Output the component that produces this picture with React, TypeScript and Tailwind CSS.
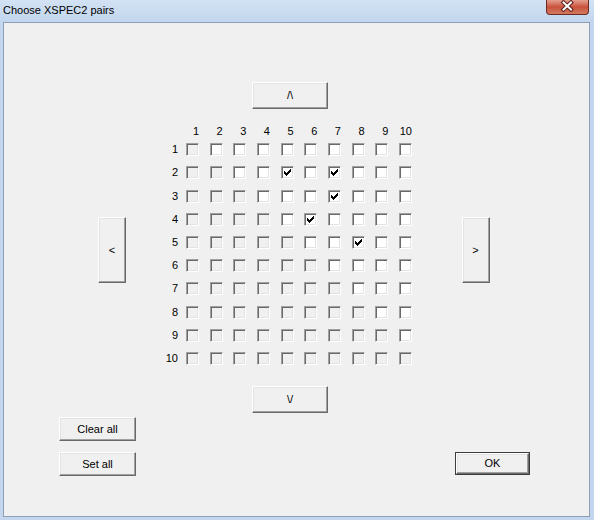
import React from "react";

const checked = new Set(["2-5", "2-7", "3-7", "4-6", "5-8"]);
const nums = [1, 2, 3, 4, 5, 6, 7, 8, 9, 10];

function Btn({ className, children }: { className: string; children: React.ReactNode }) {
  return (
    <div
      className={`flex items-center justify-center bg-[#f0f0f0] border border-t-white border-l-white border-r-[#696969] border-b-[#696969] shadow-[inset_-1px_-1px_0_#a0a0a0,inset_1px_1px_0_#e3e3e3] text-[11px] leading-[13px] text-black ${className}`}
    >
      {children}
    </div>
  );
}

function Check({ on, enabled }: { on: boolean; enabled: boolean }) {
  return (
    <div
      className={`relative w-[13px] h-[13px] border border-t-[#a0a0a0] border-l-[#a0a0a0] border-r-white border-b-white shadow-[inset_1px_1px_0_#696969,inset_-1px_-1px_0_#e3e3e3] ${
        enabled ? "bg-white" : "bg-[#f0f0f0]"
      }`}
    >
      {on && (
        <svg
          className="absolute left-[2px] top-[2px]"
          width="7"
          height="7"
          viewBox="0 0 7 7"
          shapeRendering="crispEdges"
        >
          <path
            fill="#000"
            d="M6 0h1v1h-1z M5 1h2v1h-2z M0 2h1v1h-1z M4 2h3v1h-3z M0 3h2v1h-2z M3 3h3v1h-3z M0 4h5v1h-5z M1 5h3v1h-3z M2 6h1v1h-1z"
          />
        </svg>
      )}
    </div>
  );
}

export default function App() {
  return (
    <div className="w-[594px] h-[520px] bg-[#c3d6ed] flex flex-col overflow-hidden font-['Liberation_Sans',Arial,sans-serif] text-black">
      {/* title bar */}
      <div className="h-[22px] flex items-start justify-between bg-gradient-to-b from-[#d3e2f4] to-[#c2d6ed]">
        <span className="pl-[3px] pt-[4px] text-[11px] leading-[13px] text-black">Choose XSPEC2 pairs</span>
        <div className="mr-[5px] w-[43px] h-[15px] rounded-b-[4px] border border-t-0 border-[#6b2a22] bg-gradient-to-b from-[#e3a08f] via-[#c9513c] to-[#d27a5f] relative">
          <svg className="absolute left-0 top-0" width="41" height="14" viewBox="0 0 41 14">
            <path d="M16.5 2.5 L24 9.5 M24 2.5 L16.5 9.5" stroke="#5a1e18" strokeWidth="4" strokeLinecap="square" />
            <path d="M16.5 2.5 L24 9.5 M24 2.5 L16.5 9.5" stroke="#ffffff" strokeWidth="2" strokeLinecap="square" />
          </svg>
        </div>
      </div>

      {/* client area */}
      <div className="flex-1 ml-[3px] mr-[4px] mb-[3px] border border-[#8c9fb7] bg-[#f0f0f0] flex flex-col">
        <Btn className="mt-[59px] ml-[248px] w-[76px] h-[27px]">/\</Btn>

        <div className="mt-[15px] flex items-start">
          <Btn className="ml-[94px] mt-[93px] w-[28px] h-[66px]">&lt;</Btn>

          <div className="ml-[34px] grid grid-cols-[26px_repeat(10,23.67px)] grid-rows-[14px_repeat(10,23.22px)] text-[11px]">
            <div />
            {nums.map((n) => (
              <div key={`h${n}`} className="w-[13px] text-right leading-[14px]">
                {n}
              </div>
            ))}
            {nums.map((r) => (
              <React.Fragment key={`r${r}`}>
                <div className="self-center text-right pr-[8px] leading-[13px]">{r}</div>
                {nums.map((c) => (
                  <div key={`c${r}-${c}`} className="flex items-center">
                    <Check on={checked.has(`${r}-${c}`)} enabled={c > r} />
                  </div>
                ))}
              </React.Fragment>
            ))}
          </div>

          <Btn className="ml-[39px] mt-[93px] w-[28px] h-[66px]">&gt;</Btn>
        </div>

        <Btn className="mt-[16px] ml-[248px] w-[76px] h-[27px]">\/</Btn>

        <Btn className="mt-[4px] ml-[55px] w-[77px] h-[24px]">Clear all</Btn>

        <div className="mt-[11px] flex items-start">
          <Btn className="ml-[55px] w-[77px] h-[24px]">Set all</Btn>
          <div className="ml-[319px] w-[75px] h-[23px] border border-[#3c3c3c] flex">
            <Btn className="flex-1">OK</Btn>
          </div>
        </div>
      </div>
    </div>
  );
}
